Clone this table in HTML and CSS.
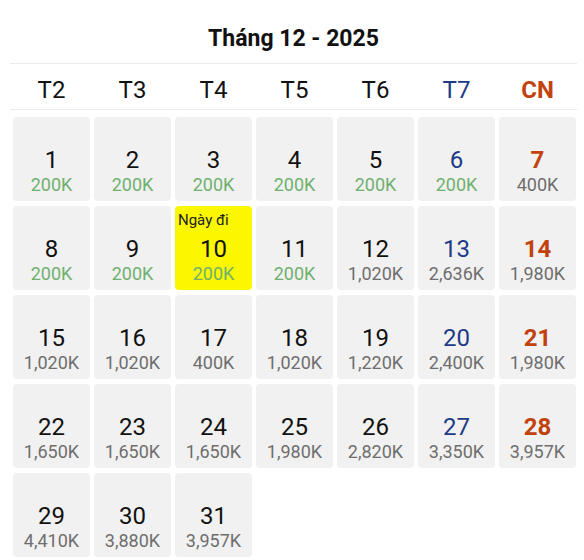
FILE: index.html
```html
<!DOCTYPE html>
<html lang="vi">
<head>
<meta charset="utf-8">
<link rel="stylesheet" href="styles.css">
</head>
<body>
<div class="cal">
  <div class="title">Tháng 12 - 2025</div>
  <div class="weekdays">
    <div>T2</div><div>T3</div><div>T4</div><div>T5</div><div>T6</div><div class="sat">T7</div><div class="sun">CN</div>
  </div>
  <div class="grid">
    <div class="cell"><div class="num">1</div><div class="price cheap">200K</div></div>
    <div class="cell"><div class="num">2</div><div class="price cheap">200K</div></div>
    <div class="cell"><div class="num">3</div><div class="price cheap">200K</div></div>
    <div class="cell"><div class="num">4</div><div class="price cheap">200K</div></div>
    <div class="cell"><div class="num">5</div><div class="price cheap">200K</div></div>
    <div class="cell"><div class="num sat">6</div><div class="price cheap">200K</div></div>
    <div class="cell"><div class="num sun">7</div><div class="price">400K</div></div>

    <div class="cell"><div class="num">8</div><div class="price cheap">200K</div></div>
    <div class="cell"><div class="num">9</div><div class="price cheap">200K</div></div>
    <div class="cell selected"><span class="tag">Ngày đi</span><div class="num">10</div><div class="price cheap">200K</div></div>
    <div class="cell"><div class="num">11</div><div class="price cheap">200K</div></div>
    <div class="cell"><div class="num">12</div><div class="price">1,020K</div></div>
    <div class="cell"><div class="num sat">13</div><div class="price">2,636K</div></div>
    <div class="cell"><div class="num sun">14</div><div class="price">1,980K</div></div>

    <div class="cell"><div class="num">15</div><div class="price">1,020K</div></div>
    <div class="cell"><div class="num">16</div><div class="price">1,020K</div></div>
    <div class="cell"><div class="num">17</div><div class="price">400K</div></div>
    <div class="cell"><div class="num">18</div><div class="price">1,020K</div></div>
    <div class="cell"><div class="num">19</div><div class="price">1,220K</div></div>
    <div class="cell"><div class="num sat">20</div><div class="price">2,400K</div></div>
    <div class="cell"><div class="num sun">21</div><div class="price">1,980K</div></div>

    <div class="cell"><div class="num">22</div><div class="price">1,650K</div></div>
    <div class="cell"><div class="num">23</div><div class="price">1,650K</div></div>
    <div class="cell"><div class="num">24</div><div class="price">1,650K</div></div>
    <div class="cell"><div class="num">25</div><div class="price">1,980K</div></div>
    <div class="cell"><div class="num">26</div><div class="price">2,820K</div></div>
    <div class="cell"><div class="num sat">27</div><div class="price">3,350K</div></div>
    <div class="cell"><div class="num sun">28</div><div class="price">3,957K</div></div>

    <div class="cell"><div class="num">29</div><div class="price">4,410K</div></div>
    <div class="cell"><div class="num">30</div><div class="price">3,880K</div></div>
    <div class="cell"><div class="num">31</div><div class="price">3,957K</div></div>
  </div>
</div>
</body>
</html>
```

FILE: styles.css
```css
* { box-sizing: border-box; }
html, body { margin: 0; padding: 0; background: #ffffff; }
body {
  font-family: Roboto, "Noto Sans", "Liberation Sans", sans-serif;
  color: #111111;
}
.cal {
  width: 584px;
  padding: 0 7px 0 10px;
}
.title {
  height: 64px;
  padding-top: 26px;
  line-height: 26px;
  text-align: center;
  font-size: 23px;
  font-weight: 700;
  border-bottom: 1px solid #ebebeb;
}
.weekdays {
  display: grid;
  grid-template-columns: repeat(7, 77px);
  column-gap: 4px;
  padding-left: 3px;
  height: 46px;
  padding-top: 12px;
  line-height: 28px;
  font-size: 24px;
  text-align: center;
  border-bottom: 1px solid #ebebeb;
}
.sat { color: #1d3b86; }
.sun { color: #c2420e; font-weight: 700; }
.grid {
  display: grid;
  grid-template-columns: repeat(7, 77px);
  grid-auto-rows: 84px;
  column-gap: 4px;
  row-gap: 5px;
  padding-left: 3px;
  padding-top: 7px;
}
.cell {
  position: relative;
  background: #f1f1f1;
  border-radius: 4px;
  padding-top: 30px;
  text-align: center;
}
.cell.selected { background: #fbf700; }
.num {
  font-size: 24px;
  line-height: 26px;
}
.price {
  font-size: 18px;
  line-height: 22px;
  color: #6e6e6e;
  margin-top: 1px;
}
.price.cheap { color: #6fb06f; }
.tag {
  position: absolute;
  top: 6px;
  left: 3px;
  font-size: 15px;
  line-height: 17px;
  color: #222222;
}
```
